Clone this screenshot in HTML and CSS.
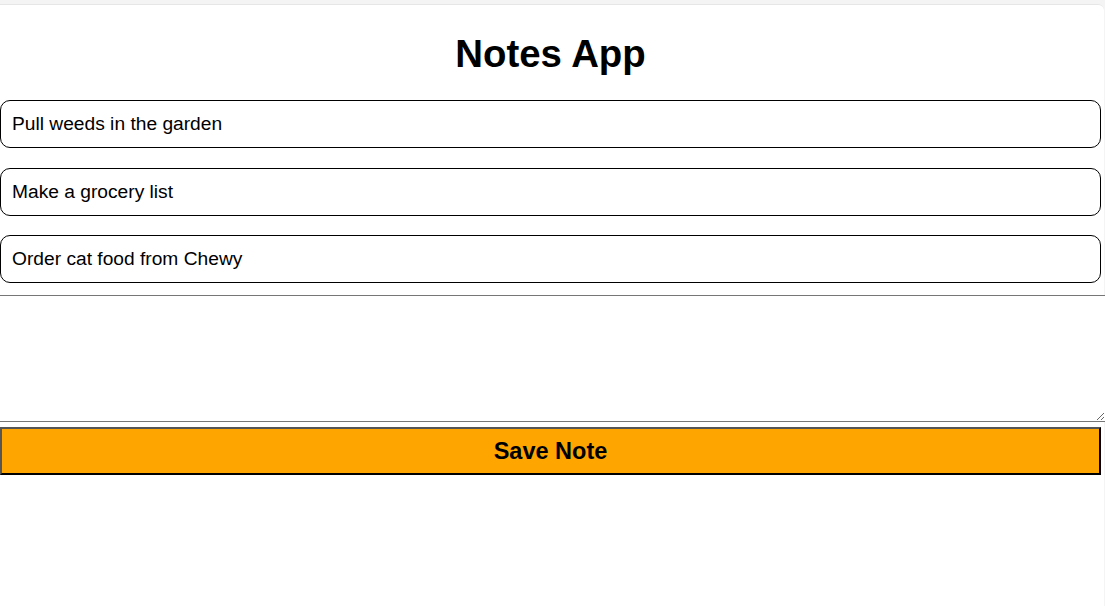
FILE: index.html
```html
<!DOCTYPE html>
<html lang="en">
<head>
<meta charset="utf-8">
<title>Notes App</title>
<link rel="stylesheet" href="styles.css">
</head>
<body>
<div class="app">
  <h1 class="title">Notes App</h1>
  <div class="notes">
    <div class="note">Pull weeds in the garden</div>
    <div class="note">Make a grocery list</div>
    <div class="note">Order cat food from Chewy</div>
  </div>
  <textarea class="editor"></textarea>
  <button class="save">Save Note</button>
</div>
</body>
</html>
```

FILE: styles.css
```css
html, body {
  margin: 0;
  padding: 0;
  height: 100%;
}
body {
  background: #f4f4f4;
  font-family: "Liberation Sans", Arial, sans-serif;
  font-size: 19.2px;
  color: #000;
  overflow: hidden;
}
.app {
  box-sizing: border-box;
  margin-top: 4px;
  height: calc(100% - 4px);
  background: #fff;
  width: 1104px;
  padding: 0 3px 0 0;
  border-top: 1px solid #e6e6e6;
  border-top-right-radius: 6px;
}
.title {
  margin: 0;
  padding-top: 27px;
  margin-bottom: 24px;
  text-align: center;
  font-size: 38.4px;
  font-weight: bold;
  line-height: 44px;
}
.notes {
  display: flex;
  flex-direction: column;
  gap: 19.5px;
}
.note {
  border: 1px solid #000;
  border-radius: 10px;
  padding: 12px 11px;
  line-height: 22px;
  font-size: 19.2px;
}
.editor {
  display: block;
  margin: 12px 0 0 -1px;
  width: 1107px;
  height: 127px;
  box-sizing: border-box;
  border: 1px solid #767676;
  padding: 2px;
  font-family: "Liberation Mono", monospace;
  font-size: 13px;
}
.save {
  display: block;
  margin-top: 5px;
  width: 100%;
  height: 48px;
  background: #ffa500;
  border-style: solid;
  border-width: 2px;
  border-color: #555 #000 #000 #555;
  font-family: "Liberation Sans", Arial, sans-serif;
  font-weight: bold;
  font-size: 23.5px;
  color: #000;
  padding: 0;
}
```
